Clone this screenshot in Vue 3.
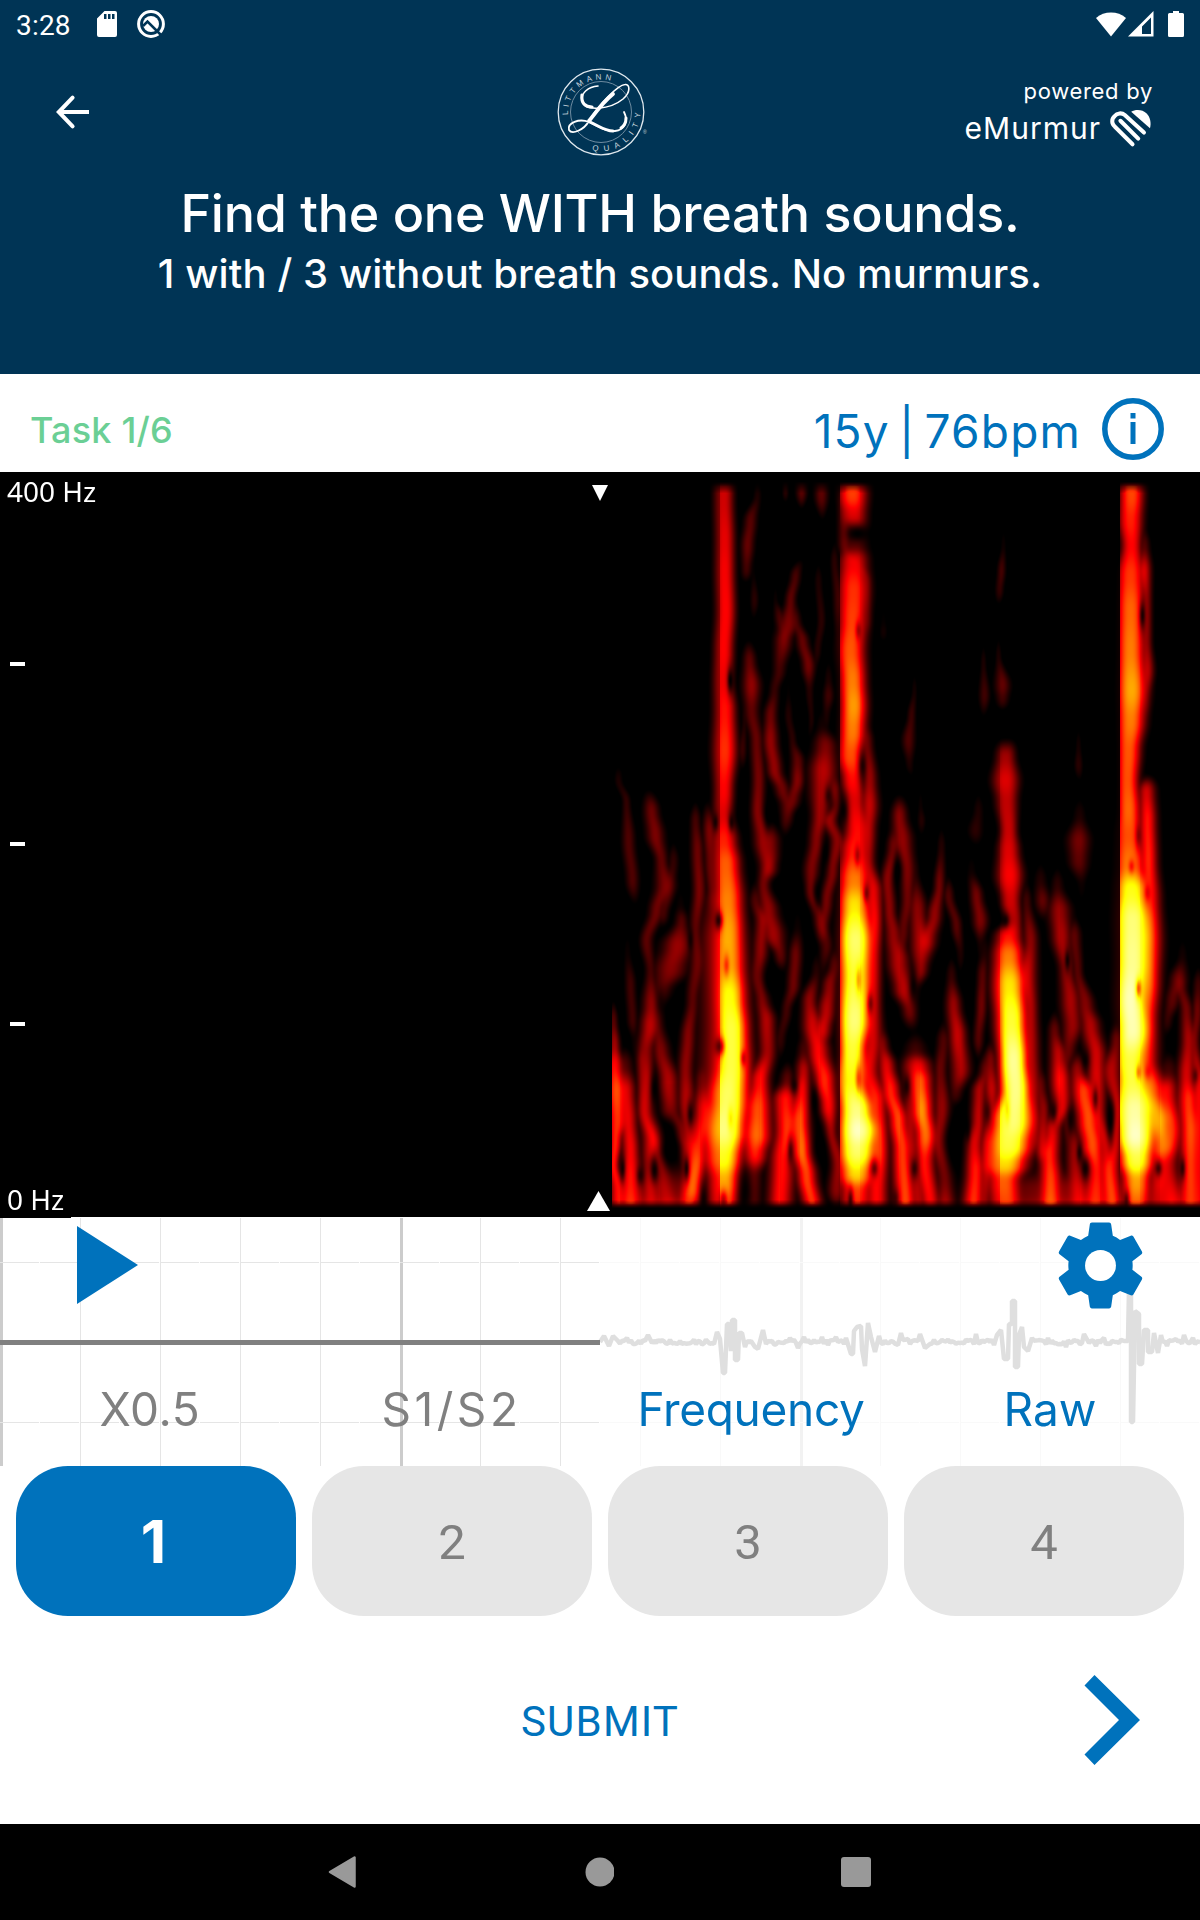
<script setup>
import { onMounted, ref } from 'vue'

const answers = [1, 2, 3, 4]
const selected = ref(1)
const toggles = ref([
  { label: 'X0.5', on: false, cls: 'speed' },
  { label: 'S1/S2', on: false, cls: 'heart' },
  { label: 'Frequency', on: true, cls: 'freq' },
  { label: 'Raw', on: true, cls: 'raw' },
])

const WIDTH = 1200
const HEIGHT = 745
const TOP = 472
const DATA_LEFT = 612
const canvas = ref(null)

// Energy ridges: "y x halfWidth energy" knots from top to bottom.
// edge is the analysis frame border where a ridge starts abruptly, leak what remains left of it.
const beats = [
  { edge: 720, leak: 0.72, line: '482 723 9 .28,500 723 9 .28,540 724 9 .31,570 724 9 .33,610 725 9 .34,650 723 9 .34,680 722 9 .32,710 724 10 .36,750 724 11 .4,790 723 9 .34,815 722 9 .3,840 723 12 .38,863 725 13 .46,900 727 14 .5,930 728 14 .53,963 728 15 .53,997 729 15 .66,1030 731 15 .74,1063 731 16 .74,1097 727 19 .78,1130 723 20 .84,1157 722 18 .7,1180 723 15 .56,1208 722 14 .48' },
  { edge: 840, leak: 0.3, line: '482 852 13 .42,495 852 13 .42,515 853 12 .3,533 855 12 .06,545 854 12 .12,560 853 13 .32,590 853 14 .4,620 852 13 .42,650 850 13 .45,680 852 12 .5,705 853 12 .54,730 852 12 .5,755 850 12 .44,780 852 10 .35,800 854 10 .3,830 857 12 .35,850 855 14 .38,880 854 15 .5,905 854 15 .64,940 855 16 .82,975 855 16 .74,1020 854 15 .84,1050 852 13 .74,1080 851 15 .68,1110 856 16 .85,1130 858 18 .95,1150 857 18 .82,1175 856 16 .62,1190 856 14 .42,1208 856 14 .38' },
  { edge: 1000, leak: 0.88, line: '735 1006 8 0,755 1005 9 .22,780 1005 12 .3,800 1006 10 .26,830 1008 8 .27,850 1008 10 .3,875 1009 12 .34,900 1010 9 .28,920 1013 8 .24,935 1008 12 .36,955 1008 14 .5,985 1009 15 .64,1020 1011 14 .74,1060 1013 13 .88,1090 1015 14 .86,1120 1012 20 .84,1145 1008 21 .76,1165 1004 20 .62,1180 1003 15 .46,1208 1005 15 .42' },
  { edge: 1120, leak: 0.12, line: '482 1131 11 .43,495 1131 11 .43,520 1130 11 .38,545 1131 9 .34,575 1130 13 .41,610 1130 13 .47,650 1130 13 .5,690 1131 14 .56,720 1130 13 .5,750 1128 11 .45,780 1127 10 .44,810 1128 11 .47,835 1128 14 .44,865 1129 15 .5,890 1131 17 .7,920 1132 18 .84,960 1132 17 .87,1000 1130 16 .93,1030 1132 16 .92,1060 1130 16 .76,1080 1132 17 .76,1110 1134 20 .9,1135 1135 18 .95,1160 1136 16 .76,1180 1136 13 .55,1208 1136 13 .45' },
]

const echoes = [
  // beside the four beats
  '900 722 16 .2,940 724 19 .32,1020 726 20 .32,1100 727 22 .36,1165 722 16 .2',
  '500 844 6 .14,545 844 6 .14,580 866 5 .16,620 866 5 .14',
  '740 866 6 .16,780 869 7 .22,805 869 8 .28,830 868 7 .25,860 868 6 .2,890 873 8 .32,920 874 7 .35,960 873 7 .3,1000 873 7 .28,1040 872 9 .3,1070 868 10 .33,1100 875 10 .4,1150 878 9 .42,1190 876 10 .36,1208 876 10 .36',
  '900 1026 5 .1,940 1030 7 .2,975 1026 9 .3,1010 1030 7 .25,1050 1030 8 .26,1090 1032 8 .25,1140 1034 7 .2,1160 1030 6 0',
  '545 1144 5 .12,570 1144 6 .3,600 1146 5 .2,640 1146 5 .2,670 1147 6 .26,700 1145 5 .15,740 1142 4 0',
  '772 1147 6 0,790 1146 8 .3,820 1147 8 .38,860 1148 8 .4,900 1150 9 .36,940 1148 11 .5,980 1148 10 .5,1020 1146 10 .42,1060 1145 11 .4,1090 1150 14 .5,1120 1158 15 .58,1145 1162 13 .5,1165 1160 10 .35,1208 1158 14 .28',
  // from the left edge to the first beat
  '760 618 4 0,780 618 4 .05,800 626 4 .08,840 628 6 .12,880 632 6 .12,910 635 4 0',
  '950 627 4 .03,985 630 5 .1,1020 632 5 .1,1040 634 4 .03',
  '785 648 5 0,810 651 7 .15,835 655 8 .17,860 661 6 .14,885 665 9 .18,910 656 7 .15,940 646 6 .13,970 650 5 .1,1005 651 8 .2,1025 650 9 .26,1050 645 8 .2,1080 646 7 .25,1110 645 8 .25,1140 652 9 .32,1165 648 7 .2,1190 650 8 .25,1208 650 9 .25',
  '860 673 5 .08,890 668 6 .12,915 663 5 .1,930 661 5 0',
  '905 680 5 .03,920 681 6 .12,945 677 13 .22,970 670 14 .2,990 662 9 .14,1010 655 8 .1',
  '820 695 5 .1,850 697 6 .15,890 699 6 .17,930 695 6 .13,960 697 7 .15,1000 692 6 .13,1035 687 7 .2,1070 685 7 .2,1100 686 8 .25,1130 690 9 .28,1165 694 10 .36,1208 688 11 .38',
  '795 707 4 0,830 709 6 .18,860 710 6 .15,900 712 5 .13,925 708 5 0',
  '1020 657 7 .13,1050 661 8 .2,1080 668 9 .25,1110 670 8 .24,1130 680 7 .18,1150 686 6 .18,1165 688 6 .2',
  '1060 641 5 .16,1110 643 6 .2,1150 656 6 .2,1180 664 9 .22,1208 668 12 .25',
  '1020 613 4 .12,1045 614 5 .22,1065 614 8 .35,1090 616 10 .44,1120 617 10 .4,1140 615 6 .38,1165 613 5 .36,1190 618 8 .35,1208 618 8 .35',
  '1065 624 8 .12,1090 626 8 .3,1120 628 8 .32,1150 630 8 .35,1180 630 11 .38,1208 630 12 .42',
  '1080 702 7 .15,1110 704 10 .34,1150 698 9 .36,1190 692 10 .38',
  // between the first and the second beat
  '495 757 4 .05,520 750 6 .13,545 747 6 .15,570 746 5 .1,585 745 4 0',
  '570 753 3 .02,600 754 4 .07,625 753 3 0',
  '635 748 4 0,660 749 6 .14,685 751 8 .21,710 751 7 .14,740 756 6 .15,780 758 6 .17,810 757 6 .19,840 762 8 .2,870 768 8 .2,885 765 5 0',
  '720 744 3 .05,750 742 4 .09,775 742 3 0',
  '555 801 4 0,575 795 5 .11,600 790 5 .14,625 788 9 .18,640 783 8 .17,670 779 6 .1,690 774 5 .08,715 770 6 .15,740 770 7 .2,770 774 7 .2,790 782 7 .16,805 787 7 .14,820 785 5 .1,840 785 4 0',
  '600 775 3 .03,615 779 5 .1,635 784 6 .12',
  '620 795 5 .1,640 802 6 .14,665 808 6 .16,690 809 4 .06,720 811 3 .05,745 808 3 0',
  '690 788 3 .02,715 788 4 .06,740 792 4 .07,760 797 6 .14,780 797 6 .19,800 792 7 .16,815 788 5 .1,835 787 5 0',
  '478 785 3 .06,492 785 3 .07,505 785 3 0',
  '478 801 5 .12,492 801 5 .13,512 801 3 0',
  '478 821 6 .13,495 821 6 .14,525 822 3 0',
  '580 818 4 .05,620 821 4 .07,650 817 4 .06,680 812 3 0',
  '560 834 4 .07,600 838 5 .1,640 838 4 .05',
  '678 828 4 .05,695 828 5 .1,715 826 4 .05',
  '725 822 6 .04,745 825 10 .18,770 823 12 .26,790 822 11 .24,815 820 8 .22,840 816 7 .18,870 811 7 .17,890 810 5 .15,920 820 6 .17,945 826 6 .12,975 822 5 .04',
  '790 834 6 .18,805 836 6 .15,820 829 7 .22,840 837 7 .2,870 832 6 .18,900 826 6 .17,930 822 6 .15',
  '900 755 6 .12,920 762 7 .2,950 760 7 .2,975 757 7 .16,1000 762 7 .18,1020 766 8 .24,1050 767 8 .22,1080 759 9 .36,1110 757 12 .46,1135 756 13 .5,1155 754 11 .4,1175 752 8 .16,1208 752 8 .14',
  '840 769 9 .18,855 770 8 .18,885 763 6 .16,910 768 9 .2,935 773 10 .22,955 780 6 .14,975 782 5 0',
  '925 797 5 .03,955 795 6 .16,985 793 6 .16,1010 786 5 .1,1040 780 5 .08',
  '970 816 5 .06,1000 809 7 .2,1025 812 9 .28,1050 818 10 .34,1080 824 10 .41,1105 828 8 .36,1130 830 6 .24,1165 838 7 .22,1190 836 8 .2',
  '965 834 6 .13,985 829 7 .2,1010 826 8 .26,1030 822 8 .3',
  '1050 803 6 .1,1070 803 7 .25,1090 801 8 .34,1120 799 9 .45,1150 801 9 .48,1175 806 9 .42,1208 812 9 .4',
  '1080 787 7 .14,1098 785 11 .38,1130 787 11 .43,1160 782 11 .37,1208 780 11 .36',
  // between the second and the third beat
  '690 914 3 .04,715 911 4 .09,740 908 6 .12,765 909 4 .05,780 912 3 0',
  '620 883 4 .02,632 883 4 .04,645 883 4 0',
  '790 899 5 0,815 899 7 .19,840 902 9 .21,870 907 7 .18,900 907 6 .16,930 903 6 .14,955 900 6 .12',
  '845 893 6 .15,880 887 6 .19,910 889 6 .19,935 893 8 .2,960 898 10 .24,990 903 9 .26,1010 909 7 .17,1035 912 6 0',
  '870 915 4 .05,910 917 8 .2,945 921 10 .26,970 920 7 .2,990 914 6 .05',
  '845 941 4 .06,885 939 5 .16,915 934 7 .2,940 926 9 .24',
  '895 948 5 .12,925 956 5 .13,955 960 4 .05',
  '805 920 3 .03,820 921 4 .06,840 921 3 0',
  '870 971 5 .03,895 976 6 .16,920 980 7 .18,945 980 4 .04',
  '810 978 5 .05,830 975 7 .07,850 976 5 0',
  '950 984 5 .05,975 982 5 .13,1005 981 5 .16,1040 978 5 .12',
  '975 951 5 .08,1005 953 7 .22,1035 957 8 .28,1070 960 9 .24,1095 955 6 .12,1110 952 5 0',
  '1040 943 6 .12,1070 940 6 .15,1110 942 8 .22,1140 938 7 .2,1180 945 8 .18,1208 945 9 .25',
  '1045 882 6 .18,1065 886 8 .3,1090 890 9 .38,1120 898 9 .43,1150 902 9 .43,1208 905 10 .45',
  '1050 915 10 .1,1065 917 12 .34,1080 919 11 .46,1110 921 10 .53,1135 925 10 .48,1160 924 9 .36,1208 930 9 .34',
  '1070 908 7 .15,1130 910 7 .24,1208 918 7 .25',
  '1070 985 6 .15,1090 979 7 .24,1120 978 7 .26,1145 974 8 .3,1170 975 9 .37,1208 973 10 .4',
  '1060 990 6 .18,1090 991 7 .28,1120 989 6 .24,1150 987 7 .28,1208 984 6 .2',
  // between the third and the fourth beat
  '545 1003 3 .03,570 1001 4 .1,590 999 4 .08,608 998 3 0',
  '655 998 3 .05,685 1002 7 .14,700 1002 6 .09,712 1002 4 0',
  '662 983 3 .05,695 984 5 .1,722 983 3 0',
  '745 1078 3 .04,765 1078 4 .07,785 1079 3 0',
  '815 1079 6 .05,840 1078 10 .17,860 1078 9 .14,885 1081 5 .03',
  '880 1040 6 .06,900 1042 7 .14,925 1044 6 0',
  '885 1057 6 .07,910 1059 10 .21,935 1061 9 .24,970 1066 7 .2,1000 1070 9 .24,1025 1072 9 .22,1050 1068 7 .15,1075 1062 6 .1',
  '935 1074 6 .14,970 1077 5 .13,1005 1085 8 .18,1025 1090 9 .24,1055 1096 9 .28,1085 1096 9 .3,1110 1097 8 .28,1150 1106 8 .3,1208 1110 10 .36',
  '1030 1054 6 .14,1055 1058 8 .26,1080 1060 9 .36,1105 1062 9 .32,1130 1052 8 .3,1155 1049 9 .38,1180 1050 10 .42,1208 1050 11 .45',
  '1070 1077 8 .22,1090 1083 11 .42,1120 1088 11 .44,1145 1092 11 .44,1170 1096 9 .36,1208 1095 13 .38',
  '1085 1040 6 .14,1110 1043 6 .2,1150 1042 7 .28',
  '1120 1068 6 .16,1150 1074 8 .22,1208 1078 10 .32',
  '1040 1116 6 .16,1070 1111 9 .26,1110 1117 5 .28,1140 1115 6 .3,1170 1110 9 .36,1208 1113 8 .36',
  // after the fourth beat
  '955 1182 5 .04,980 1178 8 .16,1000 1172 7 .13,1020 1167 5 .08,1040 1164 5 0',
  '985 1180 6 .14,1010 1186 6 .17,1040 1188 7 .24,1075 1186 8 .3,1100 1188 10 .42,1130 1190 10 .46,1165 1190 10 .43,1208 1190 12 .43',
  '985 1198 5 .1,1010 1197 5 .16,1040 1194 5 .17,1090 1199 7 .34,1208 1199 7 .3',
  '1070 1168 9 .1,1090 1166 10 .33,1130 1172 9 .36,1165 1168 9 .25,1208 1172 14 .35',
  // low frequency floor
  '1150 660 30 0,1190 660 40 .2,1208 660 40 .26',
  '1160 1070 70 0,1190 1070 80 .2,1208 1070 80 .26',
]

// Small notches: x y rx ry depth
const notches = [
  [730, 680, 3, 12, 0.9], [718, 920, 4, 9, 0.8], [726, 965, 3, 11, 0.3], [719, 1046, 5, 9, 0.65], [743, 1058, 3, 8, 0.4],
  [730, 1118, 3, 12, 0.2], [715, 822, 3, 9, 0.7], [731, 822, 3, 9, 0.7], [857, 533, 10, 7, 0.8], [858, 630, 3, 9, 0.4],
  [862, 765, 4, 14, 0.7], [858, 980, 3, 14, 0.25], [858, 1078, 3, 14, 0.3], [857, 855, 3, 10, 0.4], [866, 893, 3, 9, 0.5],
  [843, 810, 5, 15, 0.8], [870, 1003, 3, 10, 0.5], [828, 795, 4, 10, 0.6], [825, 852, 4, 14, 0.7], [817, 895, 4, 14, 0.6],
  [768, 815, 4, 13, 0.7], [1005, 920, 4, 7, 0.7], [1007, 1110, 3, 14, 0.2], [1142, 615, 3, 14, 0.8], [1138, 835, 3, 12, 0.4],
  [1131, 866, 3, 7, 0.3], [1138, 988, 3, 10, 0.45], [1138, 1072, 3, 8, 0.3], [1147, 1072, 4, 8, 0.25], [1147, 892, 3, 8, 0.25],
  [640, 1175, 4, 10, 0.7], [622, 1168, 3, 13, 0.8], [654, 1088, 4, 18, 0.8], [686, 1168, 3, 12, 0.8], [690, 1114, 4, 14, 0.8],
  [654, 1170, 4, 12, 0.8], [703, 1198, 4, 18, 0.7], [723, 1200, 4, 10, 0.5], [794, 1085, 4, 9, 0.7], [790, 1150, 3, 14, 0.6],
  [814, 1100, 4, 18, 0.75], [820, 1145, 8, 16, 0.8], [850, 1200, 3, 12, 0.7], [874, 1168, 4, 9, 0.6], [906, 1086, 4, 12, 0.7],
  [914, 1168, 4, 11, 0.7], [897, 870, 4, 15, 0.85], [913, 985, 4, 14, 0.7], [1053, 1112, 4, 11, 0.7], [1070, 1120, 4, 16, 0.75],
  [1079, 1152, 3, 10, 0.7], [1085, 1168, 4, 10, 0.7], [1067, 960, 3, 11, 0.8], [1085, 1060, 4, 10, 0.7], [1095, 1098, 3, 12, 0.6],
  [1110, 1120, 4, 20, 0.85], [1158, 1168, 4, 8, 0.7], [1182, 1168, 3, 11, 0.7], [1126, 1200, 3, 10, 0.6], [1195, 1075, 3, 8, 0.5],
  [987, 1112, 4, 14, 0.6], [967, 1130, 3, 12, 0.6], [895, 1198, 4, 10, 0.5], [954, 1140, 8, 36, 0.85], [670, 1140, 8, 28, 0.85],
  [770, 980, 7, 16, 0.8], [672, 1020, 12, 30, 0.6], [660, 1000, 5, 14, 0.5], [690, 940, 3, 12, 0.6], [745, 1190, 8, 26, 0.75],
]

const parseLine = (line) => line.split(',').map((knot) => knot.trim().split(' ').map(Number))

const addRidge = (field, knots, power, edge, leak) => {
  for (let k = 0; k < knots.length - 1; k++) {
    const [y0, x0, w0, a0] = knots[k]
    const [y1, x1, w1, a1] = knots[k + 1]
    for (let y = y0; y < y1; y++) {
      const row = y - TOP
      if (row < 0 || row >= HEIGHT) continue
      const t = (y - y0) / (y1 - y0)
      const s = t * t * (3 - 2 * t)
      const cx = x0 + (x1 - x0) * s
      const w = (w0 + (w1 - w0) * s) * 1.08
      const energy = a0 + (a1 - a0) * s
      const from = Math.max(DATA_LEFT, Math.floor(cx - w * 2))
      const to = Math.min(WIDTH - 1, Math.ceil(cx + w * 2))
      for (let x = from; x <= to; x++) {
        let v = energy * Math.exp(-Math.pow(Math.abs(x - cx) / w, power))
        if (edge && x < edge) v *= leak
        field[row * WIDTH + x] += v * v * v
      }
    }
  }
}

// Ridges that start or stop with energy left run out in a tip
const taper = (knots) => {
  const [y0, x0, w0, a0] = knots[0]
  const [y1, x1, w1, a1] = knots[knots.length - 1]
  const result = [...knots]
  if (a0 > 0 && y0 > 482) result.unshift([y0 - 24, x0, w0 * 0.5, 0])
  if (a1 > 0 && y1 < 1208) result.push([y1 + 24, x1, w1 * 0.5, 0])
  return result
}

const smooth = (field, radius) => {
  const out = new Float32Array(field.length)
  for (let row = 0; row < HEIGHT; row++) {
    const from = Math.max(0, row - radius)
    const to = Math.min(HEIGHT - 1, row + radius)
    for (let x = DATA_LEFT; x < WIDTH; x++) {
      let sum = 0
      for (let r = from; r <= to; r++) sum += field[r * WIDTH + x]
      out[row * WIDTH + x] = sum / (to - from + 1)
    }
  }
  return out
}

const channel = (v) => Math.max(0, Math.min(255, Math.round(v * 255)))

const drawSpectrogram = () => {
  const ctx = canvas.value.getContext('2d')
  const image = ctx.createImageData(WIDTH, HEIGHT)
  let field = new Float32Array(WIDTH * HEIGHT)
  beats.forEach((beat) => addRidge(field, parseLine(beat.line), 2.5, beat.edge, beat.leak))
  echoes.forEach((line) => addRidge(field, taper(parseLine(line)), 2))
  for (let i = 0; i < field.length; i++) field[i] = Math.cbrt(field[i])
  field = smooth(field, 4)

  notches.forEach(([cx, cy, rx, ry, depth]) => {
    for (let y = cy - ry * 2; y <= cy + ry * 2; y++) {
      for (let x = cx - rx * 2; x <= cx + rx * 2; x++) {
        if (x >= WIDTH || y - TOP >= HEIGHT) continue
        const d = ((x - cx) / rx) ** 2 + ((y - cy) / ry) ** 2
        field[(y - TOP) * WIDTH + x] *= 1 - depth * Math.exp(-d)
      }
    }
  })

  for (let row = 0; row < HEIGHT; row++) {
    const y = row + TOP
    const fade = Math.min(1, Math.max(0, (y - 481) / 12), Math.max(0, (1208 - y) / 9))
    for (let x = 0; x < WIDTH; x++) {
      const i = row * WIDTH + x
      const frame = x % 40 < 20 ? 1.02 : 0.97
      const v = Math.max(0, field[i] * frame - 0.015)
      image.data[i * 4] = channel(v * 3 * fade)
      image.data[i * 4 + 1] = channel((v * 3 - 1) * fade)
      image.data[i * 4 + 2] = channel((v * 3 - 2) * 0.9 * fade)
      image.data[i * 4 + 3] = 255
    }
  }
  ctx.putImageData(image, 0, 0)
}

onMounted(drawSpectrogram)

// Heart sound trace, baseline at 125 in the chart's own coordinates
const peaks = [
  [600, 125], [604, 119], [609, 129], [613, 119], [618, 124], [627, 121], [637, 126], [645, 124], [648, 118], [652, 126],
  [714, 127], [717, 115], [720, 122], [723, 156], [725, 156], [727, 107], [729, 107], [731, 134], [732, 103], [735, 103], [735, 143], [738, 143],
  [739, 116], [742, 116], [745, 130], [751, 124], [755, 130], [758, 132], [763, 113], [766, 127], [790, 121], [798, 131], [804, 120],
  [812, 126], [822, 120], [828, 128], [836, 120], [846, 121], [851, 137], [853, 137], [854, 114], [857, 110], [861, 109], [862, 132], [865, 149], [868, 106], [871, 120], [875, 135], [879, 119],
  [898, 128], [901, 116], [908, 122], [918, 124], [920, 117], [925, 131], [930, 127], [970, 123], [976, 117], [984, 125], [994, 128], [997, 118],
  [1001, 113], [1004, 142], [1008, 142], [1009, 107], [1012, 107], [1012, 84], [1015, 84], [1015, 150], [1018, 150], [1019, 118], [1022, 110], [1024, 130], [1028, 134], [1032, 121],
  [1048, 121], [1056, 126], [1066, 130], [1076, 124], [1084, 117], [1089, 126], [1096, 129], [1104, 121], [1115, 125], [1124, 124],
  [1128, 124], [1129, 72], [1131, 72], [1131, 205], [1133, 205], [1135, 94], [1139, 97], [1139, 147], [1142, 147], [1144, 113], [1148, 113], [1148, 135], [1152, 135], [1154, 116], [1158, 136], [1161, 118],
  [1167, 129], [1176, 122], [1184, 118], [1190, 126], [1193, 121], [1200, 125],
]
const noise = (x) => {
  const v = Math.sin(x * 78.233) * 43758.5453
  return (v - Math.floor(v) - 0.5) * 5
}
const tracePoints = peaks.flatMap(([x, y], i) => {
  const next = peaks[i + 1]
  const points = [`${x},${y}`]
  // low level noise fills the quiet stretches
  if (next && next[0] - x > 5) {
    for (let nx = x + 2; nx < next[0] - 1; nx += 2) points.push(`${nx},${(125 + noise(nx)).toFixed(1)}`)
  }
  return points
}).join(' ')

const gridLines = Array.from({ length: 15 }, (_, i) => ({ x: i * 80 + (i % 5 ? 0.5 : 1.5), major: i % 5 === 0 }))
</script>

<template>
  <div class="screen">
    <header class="header">
      <div class="status">
        <span class="time">3:28</span>
        <svg class="sd" width="20" height="26" viewBox="0 0 20 26"><path fill="#fff" fill-rule="evenodd" d="M7.500 0H18a2 2 0 0 1 2 2v22a2 2 0 0 1-2 2H2a2 2 0 0 1-2-2V7.500zM7 3v5h2.500V3zm4 0v5h2.500V3zm4 0v5h2.500V3z" /></svg>
        <svg class="shield" width="28" height="28" viewBox="0 0 28 28">
          <circle cx="14" cy="14" r="12.400" fill="none" stroke="#fff" stroke-width="3" />
          <circle cx="14" cy="14" r="8" fill="#fff" />
          <path d="M6 16l4.500-4.500L24 25" fill="none" stroke="#003455" stroke-width="2.600" />
        </svg>
        <span class="grow"></span>
        <svg width="30" height="26" viewBox="0 0 30 26"><path fill="#fff" d="M15 25.500L0 7a23.500 23.500 0 0 1 30 0z" /></svg>
        <svg class="signal" width="26" height="26" viewBox="0 0 26 26"><path fill="#fff" fill-rule="evenodd" d="M25.500 0v25.500H0zM23 6.500L14 15.500V23h9z" /></svg>
        <svg class="battery" width="16" height="26" viewBox="0 0 16 26"><path fill="#fff" d="M5 0h6v2h3.500A1.500 1.500 0 0 1 16 3.500v21a1.500 1.500 0 0 1-1.500 1.500h-13A1.500 1.500 0 0 1 0 24.500v-21A1.500 1.500 0 0 1 1.500 2H5z" /></svg>
      </div>

      <div class="appbar">
        <svg class="back" width="48" height="48" viewBox="0 0 24 24" fill="none" stroke="#fff" stroke-width="2"><path d="M20 12H5.500" /><path d="M11.800 4.800L4.900 12l6.900 7.200" stroke-linecap="round" /></svg>
        <svg class="logo" width="96" height="96" viewBox="-48 -48 96 96">
          <defs>
            <path id="ring-top" d="M-32.900 3A33 33 0 1 1 33 0" />
            <path id="ring-bottom" d="M-9 38.200A39.200 39.200 0 0 0 39.200-4" />
          </defs>
          <circle r="42.800" fill="none" stroke="#dfe8ee" stroke-width="1.300" />
          <circle r="30.500" fill="none" stroke="#6f8ca1" stroke-width="1" />
          <text class="ring"><textPath href="#ring-top" textLength="64">LITTMANN</textPath></text>
          <text class="ring"><textPath href="#ring-bottom" textLength="70">QUALITY</textPath></text>
          <g fill="none" stroke="#fff" stroke-linecap="round">
            <path stroke-width="1.600" d="M-3-26C-13-25-20-19-19-12C-17 1 10-3 22-13C30-20 29-28 24-27.500C17-27-2-8-12 9" />
            <path stroke-width="3.200" d="M-19-17C-20-9-16-5-9-5" />
            <path stroke-width="3.800" d="M12-18C2-10-5 0-12 9" />
            <path stroke-width="1.800" d="M-12 9C-17 18-29 23-32 18C-34 11-22 6-12 10C-2 15 6 20 14 19C23 18 28 10 23 0" />
            <path stroke-width="3" d="M-11 10C-2 14 4 19 12 19M25 6C25 11 23 14 20 16" />
          </g>
          <text class="reg" x="42" y="22">®</text>
        </svg>
        <div class="powered">
          <span class="by">powered by</span>
          <span class="brand">
            <span class="brand-name">eMurmur</span>
            <svg class="brand-mark" width="41" height="37" viewBox="0 0 122 110">
              <path d="M67 102L14 49A20 20 0 0 1 14 18A21 21 0 0 1 44 15L101 67" fill="none" stroke="#fff" stroke-width="12" stroke-linecap="round" />
              <path d="M31 32L84 85" fill="none" stroke="#fff" stroke-width="12" stroke-linecap="round" />
              <path d="M63 5C76-3 97-2 109 10C120 21 123 38 119 54Z" fill="#fff" />
            </svg>
          </span>
        </div>
      </div>

      <h1 class="title">Find the one WITH breath sounds.</h1>
      <p class="subtitle">1 with / 3 without breath sounds. No murmurs.</p>
    </header>

    <div class="info">
      <span class="task">Task 1/6</span>
      <span class="patient">15y | 76bpm</span>
      <svg class="info-icon" width="62" height="62" viewBox="0 0 62 62">
        <circle cx="31" cy="31" r="28.200" fill="none" stroke="#0072bc" stroke-width="5.500" />
        <path d="M28.500 15h5v5.500h-5zM28.500 24h5v22h-5z" fill="#0072bc" />
      </svg>
    </div>

    <div class="spectrogram">
      <canvas ref="canvas" width="1200" height="745"></canvas>
      <div class="axis">
        <span class="hz">400 Hz</span>
        <i class="tick"></i>
        <i class="tick"></i>
        <i class="tick"></i>
        <span class="hz">0 Hz</span>
      </div>
      <svg class="marker marker-top" width="16" height="16" viewBox="0 0 16 16"><path d="M0 0h16L8 16z" fill="#fff" /></svg>
      <svg class="marker marker-bottom" width="23" height="20" viewBox="0 0 23 20"><path d="M0 20h23L11.500 0z" fill="#fff" /></svg>
    </div>

    <div class="player">
      <svg class="chart" width="1200" height="249" viewBox="0 0 1200 249">
        <g v-for="line in gridLines" :key="line.x">
          <line :x1="line.x" :x2="line.x" y1="1" y2="249" :stroke="line.major ? '#cccccc' : '#e5e5e5'" :stroke-width="line.major ? 3 : 1" />
        </g>
        <line x1="0" x2="1200" y1="45.500" y2="45.500" stroke="#e5e5e5" stroke-dasharray="39 1" />
        <line x1="0" x2="1200" y1="205.500" y2="205.500" stroke="#e5e5e5" stroke-dasharray="39 1" />
        <rect x="600" y="0" width="600" height="249" fill="#fff" opacity="0.750" />
        <rect x="0" y="0" width="71" height="1" fill="#000" />
        <polyline :points="tracePoints" fill="none" stroke="#dfdfdf" stroke-width="4.500" stroke-linejoin="bevel" />
        <rect x="0" y="123" width="600" height="5" fill="#808080" />
      </svg>
      <div class="controls">
        <svg class="play" width="61" height="78" viewBox="0 0 61 78"><path d="M0 0L61 39L0 78z" fill="#0072bc" /></svg>
        <svg class="gear" width="103" height="103" viewBox="0 0 24 24"><path fill="#0072bc" d="M19.430 12.980c.04-.32.07-.64.07-.98s-.03-.66-.07-.98l2.110-1.650c.19-.15.24-.42.12-.64l-2-3.460c-.12-.22-.39-.3-.61-.22l-2.490 1c-.52-.4-1.080-.73-1.690-.98l-.38-2.650A.488.488 0 0 0 14 2h-4c-.25 0-.46.18-.49.42l-.38 2.650c-.61.25-1.170.59-1.690.98l-2.490-1c-.23-.09-.49 0-.61.22l-2 3.460c-.13.22-.07.49.12.64l2.110 1.650c-.04.32-.07.65-.07.98s.03.66.07.98l-2.110 1.650c-.19.15-.24.42-.12.64l2 3.460c.12.22.39.3.61.22l2.490-1c.52.4 1.080.73 1.690.98l.38 2.650c.03.24.24.42.49.42h4c.25 0 .46-.18.49-.42l.38-2.650c.61-.25 1.170-.59 1.690-.98l2.490 1c.23.09.49 0 .61-.22l2-3.460c.12-.22.07-.49-.12-.64l-2.110-1.650z" /><circle cx="12" cy="12" r="3.600" fill="#fff" /></svg>
      </div>
      <div class="toggles">
        <span v-for="toggle in toggles" :key="toggle.label" :class="['toggle', toggle.cls, { on: toggle.on }]" @click="toggle.on = !toggle.on">{{ toggle.label }}</span>
      </div>
    </div>

    <div class="answers">
      <button v-for="n in answers" :key="n" type="button" :class="['answer', { selected: selected === n }]" @click="selected = n">{{ n }}</button>
    </div>

    <div class="footer">
      <span class="submit">SUBMIT</span>
      <svg class="next" width="56" height="90" viewBox="0 0 56 90"><path d="M10.500 0L56 45L10.500 90L0.500 79.500L35 45L0.500 10.500z" fill="#0072bc" /></svg>
    </div>

    <nav class="navbar">
      <svg width="30" height="34" viewBox="0 0 30 34"><path d="M27.500 2.500v29L3 17z" fill="#999" stroke="#999" stroke-width="2.500" stroke-linejoin="round" /></svg>
      <svg width="30" height="30" viewBox="0 0 30 30"><circle cx="16" cy="15" r="14.500" fill="#999" /></svg>
      <svg width="30" height="30" viewBox="0 0 30 30"><rect width="30" height="30" rx="3" fill="#999" /></svg>
    </nav>
  </div>
</template>

<style>
body { margin: 0; background: #fff; }
</style>

<style scoped>
.screen { display: flex; flex-direction: column; width: 1200px; height: 1920px; overflow: hidden; background: #fff; font-family: Inter, "Liberation Sans", sans-serif; }
svg { display: block; flex: none; }

.header { box-sizing: border-box; height: 374px; background: #003455; color: #fff; text-align: center; }
.status { display: flex; align-items: center; box-sizing: border-box; height: 48px; padding: 0 16px; }
.time { width: 81px; padding-top: 3px; font: 28px/45px Roboto, sans-serif; text-align: left; letter-spacing: 0.2px; }
.shield { margin-left: 20px; }
.grow { flex: 1; }
.signal { margin-left: 2px; }
.battery { margin-left: 14px; }
.appbar { display: grid; grid-template-columns: 1fr 96px 1fr; align-items: center; height: 128px; padding: 0 48px 0 49px; }
.powered { display: flex; flex-direction: column; align-items: flex-end; }
.by { margin-right: -1px; font-size: 22px; line-height: 32px; letter-spacing: 0.7px; }
.brand { display: flex; align-items: center; gap: 9px; height: 42px; }
.brand-name { font-size: 30px; letter-spacing: 1px; }
.brand-mark { overflow: visible; margin-right: 1px; }
.ring { fill: #c9d6df; font: 8px "Liberation Sans", sans-serif; }
.reg { fill: #c9d6df; font: 5px "Liberation Sans", sans-serif; }
.title { margin: 6px 0 0; font-size: 52px; font-weight: 450; line-height: 64px; letter-spacing: -0.25px; }
.subtitle { margin: -1px 0 0; font-size: 40px; font-weight: 450; line-height: 57px; letter-spacing: 0.1px; }

.info { display: flex; align-items: center; box-sizing: border-box; height: 98px; padding: 12px 36px 0 30px; color: #0072bc; }
.task { flex: 1; padding-top: 2px; color: #6bcf95; font-size: 36px; font-weight: 500; letter-spacing: 0.2px; }
.patient { padding-top: 4px; font-size: 46px; letter-spacing: 1.2px; word-spacing: -5px; }
.info-icon { margin-left: 21px; }

.spectrogram { position: relative; height: 745px; background: #000; }
.spectrogram canvas { display: block; }
.axis { position: absolute; top: 0; left: 0; display: grid; grid-template-rows: 102px 180px 180px 180px 103px; align-items: center; height: 745px; color: #fff; }
.hz { align-self: start; padding-left: 7px; font: 28px/38px "Noto Sans", sans-serif; }
.hz:last-child { align-self: end; line-height: 35px; }
.tick { width: 15px; height: 4px; margin-left: 10px; background: #fff; }
.marker { position: absolute; }
.marker-top { top: 13px; left: 592px; }
.marker-bottom { top: 719px; left: 587px; }

.player { position: relative; height: 249px; }
.chart { position: absolute; top: 0; left: 0; }
.controls { position: relative; display: flex; justify-content: space-between; align-items: center; height: 96px; padding: 0 48px 0 77px; }
.toggles { position: relative; display: grid; grid-template-columns: repeat(4, 300px); padding-top: 62px; }
.toggle { color: #808080; font-size: 46px; line-height: 68px; text-align: center; cursor: pointer; }
.toggle.on { color: #0072bc; }
.toggle.speed { letter-spacing: 0.7px; }
.toggle.heart { padding-left: 3px; letter-spacing: 3.5px; }
.toggle.freq { padding-left: 2px; letter-spacing: -0.3px; }

.answers { display: grid; grid-template-columns: repeat(4, 1fr); gap: 16px; padding: 0 16px; }
.answer { height: 150px; padding: 3px 0 0; border: 0; border-radius: 52px; background: #e6e6e6; color: #808080; font: 49px/147px Roboto, sans-serif; cursor: pointer; }
.answer.selected { padding: 2px 5px 0 0; background: #0072bc; color: #fff; font: 700 59px/148px Inter, sans-serif; }

.footer { display: grid; grid-template-columns: 1fr auto 1fr; align-items: center; height: 208px; padding: 0 60px; color: #0072bc; }
.submit { grid-column: 2; padding-top: 4px; font: 42px/60px Roboto, sans-serif; letter-spacing: 1.2px; }
.next { justify-self: end; }

.navbar { display: flex; justify-content: space-between; align-items: center; box-sizing: border-box; height: 96px; padding: 0 329px 0 327px; background: #000; }
</style>
